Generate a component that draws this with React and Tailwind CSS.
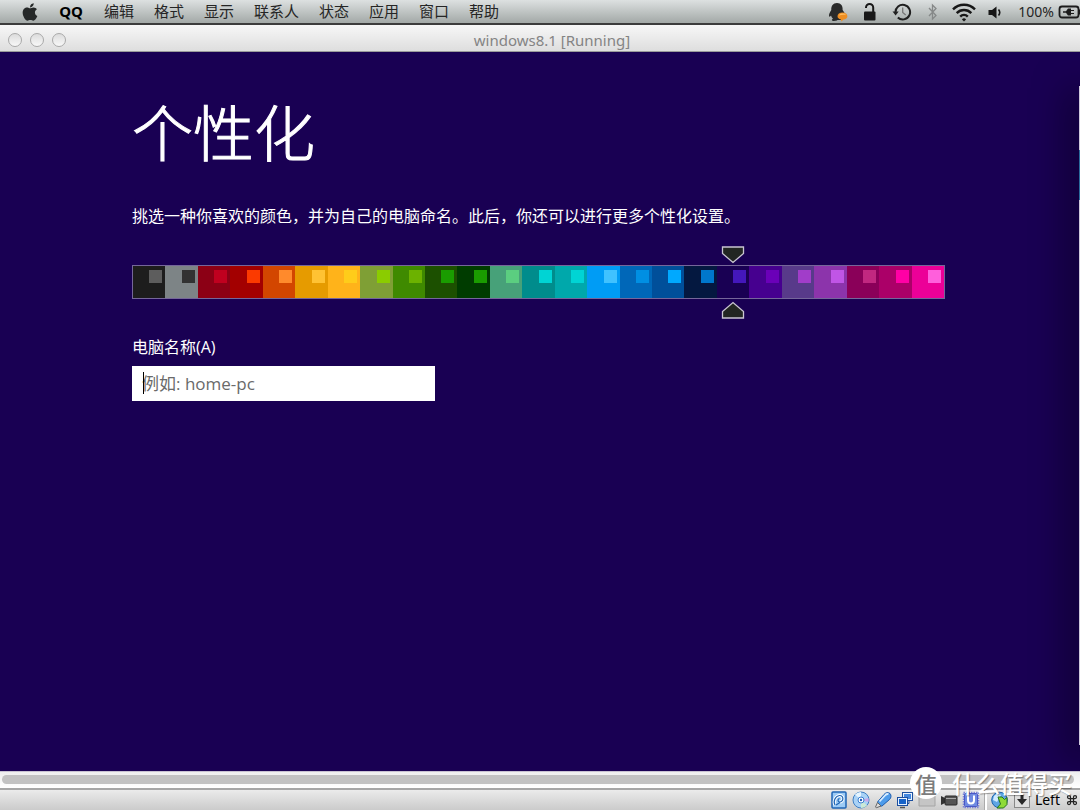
import { FaApple } from "react-icons/fa";

const menuItems = ["编辑", "格式", "显示", "联系人", "状态", "应用", "窗口", "帮助"];

const swatches = [
  { bg: "bg-[#1d1d1d]", accent: "bg-[#5d5d5d]" },
  { bg: "bg-[#7d8486]", accent: "bg-[#323232]" },
  { bg: "bg-[#8c0015]", accent: "bg-[#c0001f]" },
  { bg: "bg-[#a30000]", accent: "bg-[#fb3a00]" },
  { bg: "bg-[#d34600]", accent: "bg-[#ff8a2c]" },
  { bg: "bg-[#e69b00]", accent: "bg-[#ffc233]" },
  { bg: "bg-[#ffb31a]", accent: "bg-[#ffcc1a]" },
  { bg: "bg-[#7f9f35]", accent: "bg-[#8bcc00]" },
  { bg: "bg-[#3f8a00]", accent: "bg-[#6cb200]" },
  { bg: "bg-[#1c5000]", accent: "bg-[#1a9c00]" },
  { bg: "bg-[#003c00]", accent: "bg-[#1a9c00]" },
  { bg: "bg-[#47a179]", accent: "bg-[#5bce80]" },
  { bg: "bg-[#008c8c]", accent: "bg-[#00d4d4]" },
  { bg: "bg-[#00a8ab]", accent: "bg-[#00d4d4]" },
  { bg: "bg-[#009cf5]", accent: "bg-[#40c2ff]" },
  { bg: "bg-[#0067b8]", accent: "bg-[#008fe3]" },
  { bg: "bg-[#004f9a]", accent: "bg-[#00a9ff]" },
  { bg: "bg-[#041840]", accent: "bg-[#0077cc]" },
  { bg: "bg-[#190053]", accent: "bg-[#4417bb]" },
  { bg: "bg-[#46008f]", accent: "bg-[#6a00b8]" },
  { bg: "bg-[#583a8a]", accent: "bg-[#a13dc9]" },
  { bg: "bg-[#8c34ab]", accent: "bg-[#c055e6]" },
  { bg: "bg-[#8a0059]", accent: "bg-[#c12880]" },
  { bg: "bg-[#ab0068]", accent: "bg-[#ff00a5]" },
  { bg: "bg-[#ec0098]", accent: "bg-[#ff5fdc]" },
];

const TrayIcons = () => (
  <>
    {/* QQ */}
    <svg className="h-5 w-5" viewBox="0 0 20 20">
      <path
        d="M9 1c-4 0-6 3-5.700 7C1.500 11 .5 13 1.200 14.500c.5.600 1.300-.2 1.800-1 .3 1.400 1 2.500 2 3.300-1.500.5-1.600 1.900 0 2.100 1.500.2 3.500 0 4.500-.8h3.500c2-1 2.600-2.800 2.800-4.500 1 .6 1.500-1 .2-3.500L14.600 8C15 4 13 1 9 1z"
        fill="#292a2a"
      />
      <path
        d="M14.500 10.500c-3 0-5 1.500-5 3.700 0 1.600 1.400 2.900 3.400 3.300l.6 1.900 2-1.800c2.300-.3 3.900-1.600 3.900-3.400 0-2.200-2-3.700-4.900-3.700z"
        fill="#ee8e22"
      />
      <path d="M11 13.500c.6-1.400 2-2 3.700-2s2.800.7 3.300 1.700c-2-.7-4.500-.6-7 .3z" fill="#ffbd62" />
    </svg>
    {/* padlock */}
    <svg className="h-5 w-5" viewBox="0 0 20 20">
      <path d="M6 6V5.500a3.600 3.600 0 0 1 7.200 0V10" fill="none" stroke="#181818" strokeWidth="2" />
      <rect x="4" y="9.500" width="11.500" height="9" rx="1" fill="#181818" />
    </svg>
    {/* time machine */}
    <svg className="h-5 w-5" viewBox="0 0 20 20" fill="none">
      <path d="M3.500 10.500a7.300 7.300 0 1 1 2.300 5" stroke="#202020" strokeWidth="2" />
      <path d="M.5 9.500h6.200l-3.100 4z" fill="#202020" />
      <path d="M10.700 5.500v5l3 2.500" stroke="#777" strokeWidth="1.300" />
    </svg>
    {/* bluetooth */}
    <svg className="h-5 w-4" viewBox="-3 0 16 20" fill="none" stroke="#858888" strokeWidth="1.300">
      <path d="M2 6l7 7.500-3.500 3.500V3L9 6.500 2 14" />
    </svg>
    {/* wifi */}
    <svg className="h-5 w-6" viewBox="0 0 24 20" fill="none" stroke="#171717" strokeWidth="2.400">
      <path d="M1 7.300a15.500 15.500 0 0 1 22 0" />
      <path d="M4.700 11.100a10.300 10.300 0 0 1 14.600 0" />
      <path d="M8.200 14.600a5.400 5.400 0 0 1 7.600 0" />
      <path d="M12 19.500l-2.100-2.100a3 3 0 0 1 4.200 0z" fill="#171717" stroke="none" />
    </svg>
    {/* speaker */}
    <svg className="h-5 w-3.5" viewBox="1.500 0 14 20">
      <path d="M2 8h3.500L10 4.500v12L5.500 13H2z" fill="#171717" />
      <path d="M12 7.500c1.500 1.800 1.500 4.200 0 6" fill="none" stroke="#171717" strokeWidth="1.600" />
    </svg>
  </>
);

const MenuBar = () => (
  <header className="flex h-[25px] shrink-0 items-center justify-between overflow-hidden border-b-2 border-[#3c3c3c] bg-linear-to-b from-[#dde1e1] to-[#a3a9a7] text-[#252525]">
    <nav className="flex items-center gap-5 pl-5 text-[15px]">
      <button aria-label="Apple">
        <FaApple className="h-5 w-5 text-[#252828]" />
      </button>
      <button className="-ml-0.5 w-[26px] font-['Noto_Sans'] text-[15px] font-bold text-black">QQ</button>
      {menuItems.map((item) => (
        <button key={item}>{item}</button>
      ))}
    </nav>
    <div className="flex shrink-0 items-center">
      <div className="flex items-center gap-3">
        <TrayIcons />
      </div>
      <span className="ml-4 font-['Noto_Sans'] text-[14px]">100%</span>
      {/* battery, runs off the edge */}
      <svg className="ml-1 h-5 w-[22px]" viewBox="0 0 22 20">
        <rect x="1.500" y="4.500" width="19" height="11" rx="2.500" fill="none" stroke="#1c1c1c" strokeWidth="1.800" />
        <path d="M21 7.500h2v5h-2z" fill="#1c1c1c" />
        <path d="M5 9.200h3l2-2.700h3v1.500h3v1h-3v2h3v1h-3v1.500h-3l-2-2.700H5z" fill="#1c1c1c" />
      </svg>
    </div>
  </header>
);

const TitleBar = () => (
  <div className="grid h-[27px] shrink-0 grid-cols-[1fr_auto_1fr] items-center border-b border-[#9b9b9b] bg-linear-to-b from-[#f7f7f7] to-[#dedede] pt-1">
    <div className="flex gap-2 pl-2">
      {["Close", "Minimize", "Zoom"].map((name) => (
        <button
          key={name}
          aria-label={name}
          className="h-3.5 w-3.5 rounded-full border border-[#a9a9a9] bg-linear-to-b from-[#dcdcdc] to-[#f8f8f8]"
        />
      ))}
    </div>
    <h1 className="pl-6 font-['Noto_Sans'] text-[15px] leading-5 text-[#848484]">windows8.1 [Running]</h1>
  </div>
);

const Marker = ({ flipped = false }) => (
  <svg
    className={`absolute left-1/2 h-[18px] w-6 -translate-x-1/2 ${flipped ? "top-[35px] rotate-180" : "-top-5"}`}
    viewBox="0 0 24 18"
  >
    <path d="M1.500 1h21v6.500L12 16.500 1.500 7.500z" fill="#222622" stroke="#c9c5d2" strokeWidth="1.300" />
  </svg>
);

const ColorPicker = () => (
  <fieldset className="mt-[38px] w-full max-w-[813px]" aria-label="颜色">
    <div className="flex border border-[#75669a]">
      {swatches.map((swatch, index) => (
        <label key={index} className={`relative flex h-8 flex-1 justify-end pt-1 pr-[3px] ${swatch.bg}`}>
          <input
            type="radio"
            name="color"
            className="sr-only"
            aria-label={`颜色 ${index + 1}`}
            defaultChecked={index === 18}
          />
          <span className={`h-[13px] w-[13px] ${swatch.accent}`} />
          {index === 18 && (
            <>
              <Marker />
              <Marker flipped />
            </>
          )}
        </label>
      ))}
    </div>
  </fieldset>
);

const Personalize = () => (
  <main className="relative flex-1 overflow-hidden bg-[#190053] px-[132px] pt-[49px] text-white">
    <h2 className="text-[61px] leading-[60px] font-light [-webkit-text-stroke:1px_white]">个性化</h2>
    <p className="mt-[42px] text-base leading-6">
      挑选一种你喜欢的颜色，并为自己的电脑命名。此后，你还可以进行更多个性化设置。
    </p>
    <ColorPicker />
    <div className="mt-9 flex flex-col items-start">
      <label htmlFor="pc-name" className="font-['Open_Sans','Noto_Sans_CJK_SC',sans-serif] text-base leading-6">
        电脑名称(A)
      </label>
      <div className="relative mt-[7px]">
        <input
          id="pc-name"
          type="text"
          placeholder="例如: home-pc"
          className="block h-[35px] w-[303px] bg-white px-2.5 font-['Open_Sans','Noto_Sans_CJK_SC',sans-serif] text-[17px] text-black outline-none placeholder:text-[#6a6a6a]"
        />
        <span className="absolute top-1.5 left-[11px] h-[22px] w-px bg-black" />
      </div>
    </div>
    {/* neighbouring window and its shadow */}
    <div className="absolute top-[34px] right-0 bottom-[26px] w-px bg-[#cfc9dc] shadow-[0_10px_36px_8px_rgba(0,0,0,0.6)]">
      <div className="mt-16 h-[50px] bg-[#2a6c9c]" />
    </div>
  </main>
);

const StatusIcons = () => (
  <div className="flex items-center gap-1">
    {/* hard disk */}
    <svg className="h-[18px] w-[18px]" viewBox="0 0 18 18">
      <rect x="2" y="1" width="14" height="16" rx="1" fill="#9ccbf5" stroke="#1f66b5" strokeWidth="1.500" />
      <path d="M5 14c-2-3 0-9 4.500-9.500C14 4.200 14 11 9.500 11" fill="none" stroke="#fff" strokeWidth="3" />
      <path d="M5 14c-2-3 0-9 4.500-9.500C14 4.200 14 11 9.500 11c-2-.5-2-3 0-3.500M6 14l4-2.500" fill="none" stroke="#1f66b5" strokeWidth="1.200" />
    </svg>
    {/* optical disc */}
    <svg className="h-[18px] w-[18px]" viewBox="0 0 18 18">
      <circle cx="9" cy="9" r="8" fill="#a9d2f6" stroke="#3f7fc4" />
      <path d="M9 9L3 3.500A8 8 0 0 1 9 1z" fill="#e4f4ff" />
      <path d="M9 9l6 5.500A8 8 0 0 1 9 17z" fill="#cbe9d6" />
      <path d="M9 9l7.500-2v4z" fill="#c9a8ea" />
      <circle cx="9" cy="9" r="3" fill="#fff" stroke="#397ed0" />
      <circle cx="9" cy="9" r="1.200" fill="#245fba" />
    </svg>
    {/* usb stick */}
    <svg className="h-[18px] w-[18px]" viewBox="0 0 18 18">
      <path d="M3.500 11l6.500-7.500c1.500-2 4.500-2.500 6-1s1.300 4.500-.5 6L8 15c-2 .7-5-2-4.500-4z" fill="#4d9bea" stroke="#1d5cae" />
      <path d="M5.500 10.500L11.500 4c1-1 2-1.300 3-.7" fill="none" stroke="#d7ecff" strokeWidth="1.800" />
      <path d="M3.500 11.500L1.500 16l.8.800L7 15z" fill="#ddd" stroke="#666" />
    </svg>
    {/* network */}
    <svg className="h-[18px] w-[18px]" viewBox="0 0 18 18" stroke="#1c4f9f">
      <rect x="6.500" y="1.500" width="10" height="8" fill="#e8f2ff" />
      <rect x="8" y="3" width="7" height="5" fill="#4487dd" stroke="none" />
      <path d="M13 10v2.500h-1" fill="none" />
      <rect x="1.500" y="6.500" width="10" height="8" fill="#e8f2ff" />
      <rect x="3" y="8" width="7" height="5" fill="#1763c8" stroke="none" />
      <path d="M4 16.500h5" strokeWidth="1.500" stroke="#555" />
    </svg>
    {/* shared folder */}
    <svg className="h-[18px] w-[18px]" viewBox="0 0 18 18">
      <path d="M1 3h6l1 2h9v10H1z" fill="#c5c5c5" stroke="#a4a4a4" />
    </svg>
    {/* video capture */}
    <svg className="h-[18px] w-[18px]" viewBox="0 0 18 18">
      <path d="M1 5l4 2v5l-4 2z" fill="#333" />
      <rect x="5" y="5" width="12" height="9" rx="1" fill="#545454" stroke="#292929" />
      <path d="M6 7.500h10" stroke="#aaa" />
    </svg>
    {/* cpu */}
    <svg className="h-[18px] w-[18px]" viewBox="0 0 18 18">
      <rect x="1.500" y="1.500" width="15" height="15" fill="none" stroke="#7b84d8" strokeWidth="1.500" strokeDasharray="1.500 1" />
      <rect x="2.500" y="2.500" width="13" height="13" rx="1" fill="#6f8ae2" stroke="#4a58c4" />
      <path d="M6 4.500v5a3 3 0 0 0 6 0v-5" fill="none" stroke="#fff" strokeWidth="2" />
    </svg>
    <div className="h-5 w-[3px] border-l border-[#ababab] bg-white" />
    {/* mouse integration */}
    <svg className="h-[18px] w-[18px]" viewBox="0 0 18 18">
      <circle cx="8.500" cy="9" r="7.800" fill="#5fa5e4" stroke="#1c63ad" />
      <path d="M3 5l4-3 3 2-4 7-4-2z" fill="#cfeaff" />
      <path d="M7 6h4l2.500 2.500L16 6.500v7l-3.500 3.500H6l3.500-4z" fill="#8edb38" stroke="#27731c" />
    </svg>
    {/* host key */}
    <svg className="h-[18px] w-[18px]" viewBox="0 0 18 18">
      <rect x="1.500" y="1.500" width="15" height="15" fill="#dedede" stroke="#888" />
      <path d="M7.500 4h3v4H14l-5 6-5-6h3.500z" fill="#292929" />
    </svg>
  </div>
);

const StatusBar = () => (
  <footer className="relative shrink-0">
    <div className="h-[17px] border-t border-[#c8c2d2] bg-linear-to-b from-[#eeeeee] to-white pt-[3px] pr-1.5 pl-0.5">
      <div className="h-[9px] rounded-full bg-[#c2c2c2]" />
    </div>
    <div className="flex h-[22px] items-center justify-end border-t-2 border-[#a6a6a6] bg-linear-to-b from-[#ebebeb] to-[#cbcbcb] pr-0.5 text-black">
      <StatusIcons />
      <span className="ml-1 flex items-center gap-1.5 font-['Noto_Sans'] text-[14px] leading-5">
        Left
        <svg className="h-3 w-3" viewBox="0 0 24 24" fill="none" stroke="#222" strokeWidth="2.500">
          <path d="M15 6v12a3 3 0 1 0 3-3H6a3 3 0 1 0 3 3V6a3 3 0 1 0-3 3h12a3 3 0 1 0-3-3" />
        </svg>
      </span>
    </div>
    {/* watermark */}
    <div className="absolute right-2 bottom-[11px] flex items-center gap-2.5 text-2xl leading-8 text-white text-shadow-[1px_1px_1px_rgba(0,0,0,0.35)]">
      <span className="flex h-8 w-8 items-center justify-center rounded-full bg-white text-[22px] font-medium text-[#7c7c7c] text-shadow-none">
        值
      </span>
      <span className="font-medium">什么值得买</span>
    </div>
  </footer>
);

export default function App() {
  return (
    <div className="flex min-h-screen flex-col bg-[#3c3c3c] font-['Noto_Sans_CJK_SC',sans-serif]">
      <MenuBar />
      <TitleBar />
      <Personalize />
      <StatusBar />
    </div>
  );
}
